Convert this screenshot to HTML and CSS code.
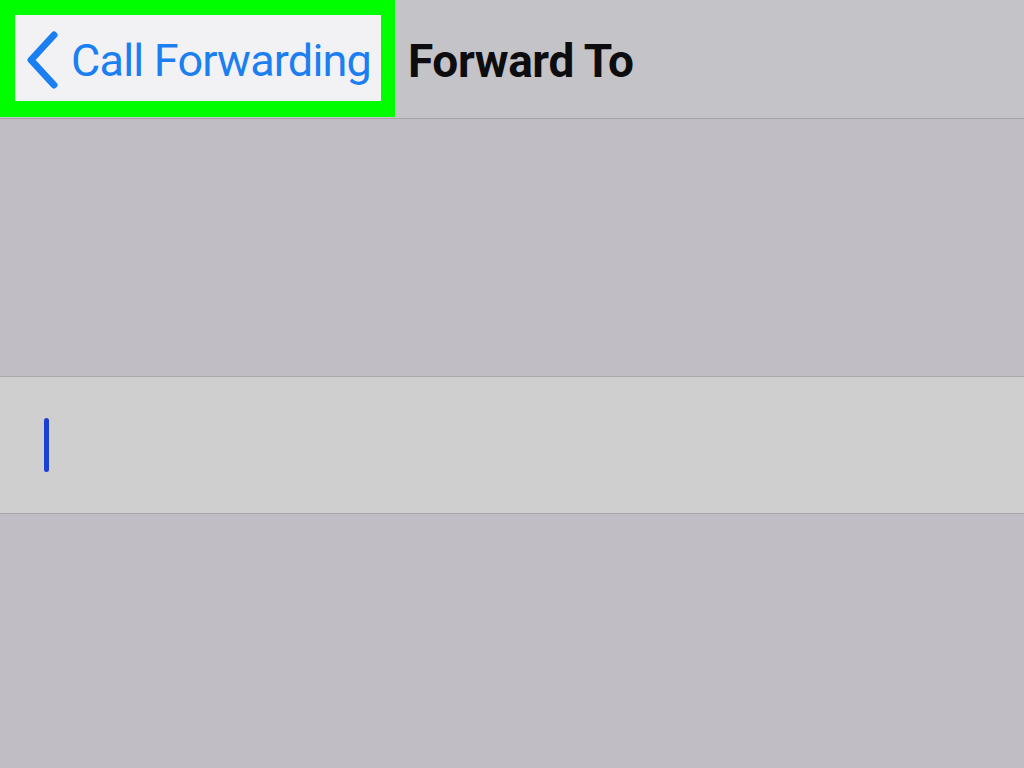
FILE: index.html
```html
<!DOCTYPE html>
<html>
<head>
<meta charset="utf-8">
<link rel="stylesheet" href="styles.css">
</head>
<body>
<header class="navbar">
  <div class="highlight">
    <a class="back">
      <svg class="chevron" width="34" height="58" viewBox="0 0 34 58">
        <path d="M29 4 L6 29 L29 54" fill="none" stroke="#1b7ff2" stroke-width="7" stroke-linecap="round" stroke-linejoin="round"/>
      </svg>
      <span class="back-label">Call Forwarding</span>
    </a>
  </div>
  <h1 class="title">Forward To</h1>
</header>
<main class="content">
  <div class="spacer"></div>
  <div class="field"><span class="cursor"></span></div>
  <div class="rest"></div>
</main>
</body>
</html>
```

FILE: styles.css
```css
html, body {
  margin: 0;
  padding: 0;
}
body {
  width: 1024px;
  height: 768px;
  overflow: hidden;
  background: #c0bdc4;
  font-family: Roboto, "Liberation Sans", Arial, sans-serif;
}
.navbar {
  height: 118px;
  background: #c4c3c8;
  border-bottom: 1px solid #a3a2a7;
  display: flex;
  align-items: flex-start;
}
.highlight {
  width: 366px;
  height: 86px;
  border: 15px solid #00fe00;
  border-right-width: 14px;
  border-bottom-width: 16px;
  background: #f2f2f4;
  display: flex;
  align-items: center;
}
.back {
  display: flex;
  align-items: center;
  color: #1b7ff2;
  text-decoration: none;
  white-space: nowrap;
}
.chevron {
  margin-left: 10px;
  margin-right: 12px;
  margin-top: 3px;
}
.back-label {
  font-size: 45px;
  letter-spacing: -0.8px;
  padding-top: 4px;
}
.title {
  margin: 0 0 0 13px;
  padding-top: 4px;
  height: 113px;
  display: flex;
  align-items: center;
  white-space: nowrap;
  font-size: 46px;
  font-weight: bold;
  color: #0d0d0f;
  letter-spacing: -0.4px;
}
.content {
  display: flex;
  flex-direction: column;
}
.spacer {
  height: 257px;
  border-bottom: 1px solid #a9a8ac;
}
.field {
  height: 136px;
  background: #cfcfcf;
  border-bottom: 1px solid #a9a8ac;
  display: flex;
  align-items: center;
}
.cursor {
  display: block;
  width: 5px;
  height: 54px;
  margin-left: 44px;
  border-radius: 3px;
  background: #1a40d2;
}
.rest {
  flex: 1;
}
```
